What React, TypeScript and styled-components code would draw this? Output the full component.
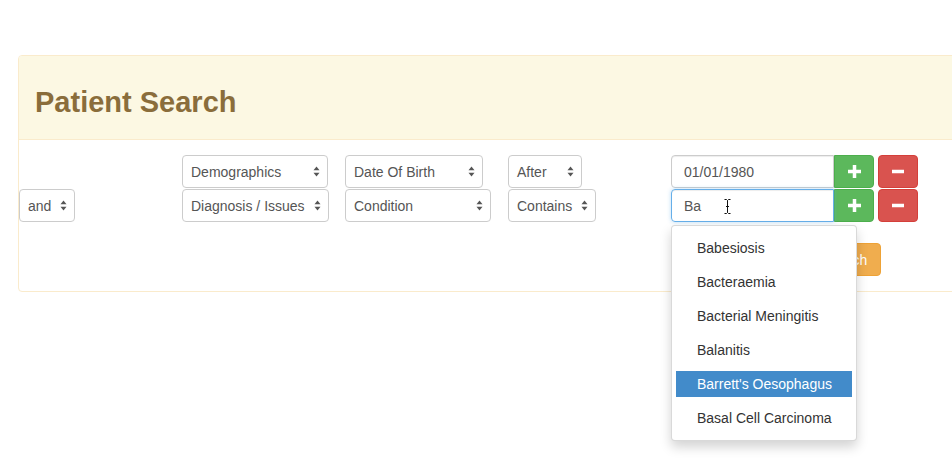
import React from "react";
import styled, { createGlobalStyle } from "styled-components";

const GlobalStyle = createGlobalStyle`
  html, body {
    margin: 0;
    padding: 0;
    background: #fff;
    overflow: hidden;
  }
  body {
    font-family: "Liberation Sans", Arial, sans-serif;
    font-size: 14px;
    color: #333;
  }
`;

const Page = styled.div`
  width: 952px;
  height: 476px;
  padding-top: 55px;
  padding-left: 18px;
  box-sizing: border-box;
  overflow: hidden;
`;

const Panel = styled.div`
  width: 1000px;
  border: 1px solid #faebcc;
  border-radius: 4px;
  background: #fff;
`;

const PanelHeading = styled.div`
  background: #fcf8e3;
  border-bottom: 1px solid #faebcc;
  border-radius: 3px 3px 0 0;
  padding: 30px 16px 21px;
`;

const Title = styled.h1`
  margin: 0;
  font-size: 29px;
  line-height: 32px;
  font-weight: 700;
  color: #8a6d3b;
`;

const PanelBody = styled.div`
  padding: 15px 0 15px;
`;

const Row = styled.div`
  display: flex;
  height: 33px;
  margin-bottom: 1px;
`;

const Cell = styled.div<{ $w?: number }>`
  width: ${(p) => p.$w ?? 163}px;
  flex: none;
  position: relative;
`;

const SelectBox = styled.div<{ $w: number }>`
  width: ${(p) => p.$w}px;
  height: 33px;
  box-sizing: border-box;
  border: 1px solid #ccc;
  border-radius: 4px;
  background: #fff;
  display: flex;
  align-items: center;
  justify-content: space-between;
  padding: 0 7px 0 8px;
  color: #555;
  font-size: 14px;
  white-space: nowrap;
`;

const InputGroup = styled.div`
  display: flex;
  align-items: stretch;
  height: 33px;
`;

const TextInput = styled.div<{ $focus?: boolean }>`
  position: relative;
  width: 163px;
  box-sizing: border-box;
  border: 1px solid ${(p) => (p.$focus ? "#66afe9" : "#ccc")};
  border-radius: 4px 0 0 4px;
  padding: 0 12px;
  display: flex;
  align-items: center;
  color: #555;
  font-size: 14px;
  box-shadow: ${(p) =>
    p.$focus
      ? "inset 0 1px 1px rgba(0,0,0,.075), 0 0 4px rgba(102,175,233,.45)"
      : "inset 0 1px 1px rgba(0,0,0,.075)"};
`;

const IconButton = styled.div<{ $kind: "add" | "remove" }>`
  width: 40px;
  box-sizing: border-box;
  display: flex;
  align-items: center;
  justify-content: center;
  background: ${(p) => (p.$kind === "add" ? "#5cb85c" : "#d9534f")};
  border: 1px solid ${(p) => (p.$kind === "add" ? "#4cae4c" : "#d43f3a")};
  border-radius: ${(p) => (p.$kind === "add" ? "0 4px 4px 0" : "4px")};
  margin-left: ${(p) => (p.$kind === "add" ? 0 : 4)}px;
`;

const Cursor = styled.svg`
  position: absolute;
  left: 52px;
  top: 9px;
`;

const Dropdown = styled.ul`
  position: absolute;
  top: 36px;
  left: 0;
  width: 186px;
  box-sizing: border-box;
  margin: 0;
  padding: 9px 4px;
  list-style: none;
  background: #fff;
  border: 1px solid rgba(0, 0, 0, 0.15);
  border-radius: 4px;
  box-shadow: 0 6px 12px rgba(0, 0, 0, 0.175);
  z-index: 10;
  display: flex;
  flex-direction: column;
  gap: 8px;
`;

const Option = styled.li<{ $active?: boolean }>`
  height: 26px;
  line-height: 26px;
  padding-left: 21px;
  font-size: 14px;
  white-space: nowrap;
  color: ${(p) => (p.$active ? "#fff" : "#333")};
  background: ${(p) => (p.$active ? "#428bca" : "transparent")};
`;

const Footer = styled.div`
  display: flex;
  margin-top: 21px;
  padding-left: 790px;
`;

const SearchButton = styled.div`
  height: 33px;
  box-sizing: border-box;
  padding: 0 13px;
  display: flex;
  align-items: center;
  background: #f0ad4e;
  border: 1px solid #eea236;
  border-radius: 4px;
  color: #fff;
  font-size: 14px;
`;

const Arrows = () => (
  <svg width="7" height="11" viewBox="0 0 7 11">
    <path d="M3.5 0.5 L6.5 4.2 H0.5 Z" fill="#555" />
    <path d="M3.5 10.5 L6.5 6.8 H0.5 Z" fill="#555" />
  </svg>
);

const Plus = () => (
  <svg width="13" height="13" viewBox="0 0 13 13">
    <rect x="4.75" y="0" width="3.5" height="13" fill="#fff" />
    <rect x="0" y="4.75" width="13" height="3.5" fill="#fff" />
  </svg>
);

const Minus = () => (
  <svg width="12" height="13" viewBox="0 0 12 13">
    <rect x="0" y="4.75" width="12" height="3.5" fill="#fff" />
  </svg>
);

const Select = ({ label, width }: { label: string; width: number }) => (
  <SelectBox $w={width}>
    <span>{label}</span>
    <Arrows />
  </SelectBox>
);

const options = [
  "Babesiosis",
  "Bacteraemia",
  "Bacterial Meningitis",
  "Balanitis",
  "Barrett's Oesophagus",
  "Basal Cell Carcinoma",
];

export default function App() {
  return (
    <Page>
      <GlobalStyle />
      <Panel>
        <PanelHeading>
          <Title>Patient Search</Title>
        </PanelHeading>
        <PanelBody>
          <Row>
            <Cell />
            <Cell>
              <Select label="Demographics" width={146} />
            </Cell>
            <Cell>
              <Select label="Date Of Birth" width={138} />
            </Cell>
            <Cell>
              <Select label="After" width={74} />
            </Cell>
            <Cell $w={300}>
              <InputGroup>
                <TextInput>01/01/1980</TextInput>
                <IconButton $kind="add">
                  <Plus />
                </IconButton>
                <IconButton $kind="remove">
                  <Minus />
                </IconButton>
              </InputGroup>
            </Cell>
          </Row>
          <Row>
            <Cell>
              <Select label="and" width={56} />
            </Cell>
            <Cell>
              <Select label="Diagnosis / Issues" width={147} />
            </Cell>
            <Cell>
              <Select label="Condition" width={146} />
            </Cell>
            <Cell>
              <Select label="Contains" width={88} />
            </Cell>
            <Cell $w={300}>
              <InputGroup>
                <TextInput $focus>
                  Ba
                  <Cursor width="7" height="15" viewBox="0 0 7 15">
                    <path
                      d="M0.5 0.5 H2.5 L3.5 1.5 L4.5 0.5 H6.5 M3.5 1.5 V13.5 M0.5 14.5 H2.5 L3.5 13.5 L4.5 14.5 H6.5 M2 7.5 H5"
                      stroke="#111"
                      strokeWidth="1"
                      fill="none"
                    />
                  </Cursor>
                </TextInput>
                <IconButton $kind="add">
                  <Plus />
                </IconButton>
                <IconButton $kind="remove">
                  <Minus />
                </IconButton>
              </InputGroup>
              <Dropdown>
                {options.map((o) => (
                  <Option key={o} $active={o === "Barrett's Oesophagus"}>
                    {o}
                  </Option>
                ))}
              </Dropdown>
            </Cell>
          </Row>
          <Footer>
            <SearchButton>Search</SearchButton>
          </Footer>
        </PanelBody>
      </Panel>
    </Page>
  );
}
